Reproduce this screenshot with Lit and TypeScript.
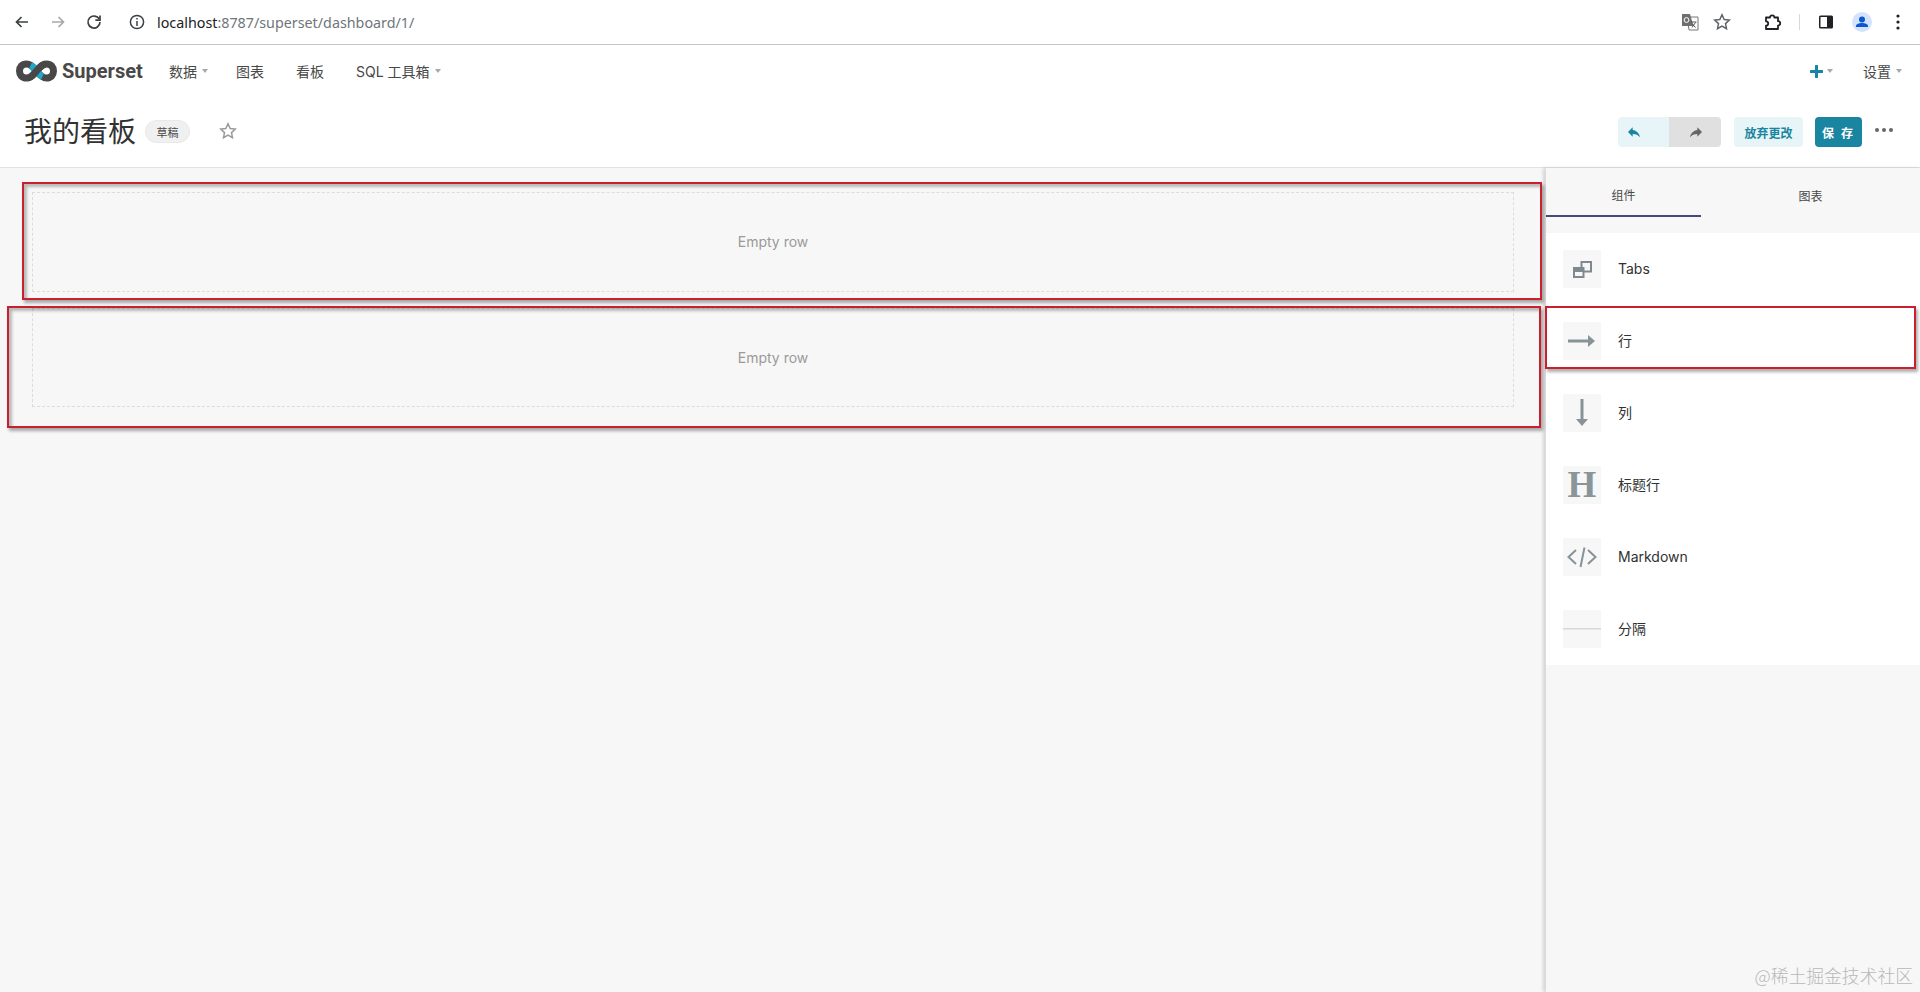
import { LitElement, html, css } from "lit";
import { customElement } from "lit/decorators.js";

@customElement("app-root")
export class AppRoot extends LitElement {
  static styles = css`
    :host { display: block; width: 1920px; height: 992px; position: relative; overflow: hidden; background: #f7f7f7; font-family: "Inter", "Noto Sans CJK SC", sans-serif; color: #323232; }
    * { box-sizing: border-box; }
    svg { display: block; }

    .chrome { height: 45px; background: #fff; border-bottom: 1px solid #c4c4c4; display: flex; align-items: center; padding-left: 12px; }
    .cb { width: 20px; height: 20px; margin-right: 16px; }
    .info { margin-left: 7px; margin-right: 10px; width: 20px; height: 20px; }
    .url { font-family: "Noto Sans", sans-serif; font-size: 14.3px; color: #70757a; white-space: nowrap; }
    .url b { font-weight: 400; color: #202124; }
    .chrome-right { margin-left: auto; display: flex; align-items: center; height: 100%; }
    .tr { width: 18px; height: 18px; margin-right: 14px; }
    .st { width: 18px; height: 18px; margin-right: 33px; }
    .pz { width: 18px; height: 18px; margin-right: 17px; }
    .sep { width: 1px; height: 16px; background: #d8d8d8; margin-right: 18px; }
    .sp { width: 16px; height: 16px; margin-right: 18px; }
    .av { width: 20px; height: 20px; margin-right: 24px; }
    .dots { width: 4px; height: 16px; margin-right: 20px; }

    .nav { height: 55px; background: #fff; display: flex; align-items: center; padding: 0 0 3px 16px; font-size: 14px; color: #484848; }
    .logo { width: 41px; height: 22px; margin-right: 5px; }
    .brand { font-family: "Roboto", sans-serif; font-weight: 700; font-size: 20px; color: #484848; margin-right: 26px; width: 81px; white-space: nowrap; }
    .menu { display: flex; gap: 32px; align-items: center; }
    .mi { display: flex; align-items: center; white-space: nowrap; }
    .mi.tight { margin-right: -4px; }
    .caret { width: 0; height: 0; border-left: 3.5px solid transparent; border-right: 3.5px solid transparent; border-top: 4px solid #a8a8a8; margin-left: 5px; }
    .nav-right { margin-left: auto; display: flex; align-items: center; padding-right: 18px; }
    .plus { width: 13px; height: 13px; }
    .plus-group { display: flex; align-items: center; margin-right: 30px; }
    .plus-group .caret { margin-left: 4px; }

    .header { height: 68px; background: #fff; border-bottom: 1px solid #e2e2e2; display: flex; align-items: center; padding: 0 27px 3px 24px; }
    .title { font-size: 28px; line-height: 40px; color: #323232; white-space: nowrap; }
    .tag { width: 45px; height: 23px; margin-left: 9px; margin-top: -1px; border-radius: 12px; background: #f0f0f0; border: 1px solid #e8e8e8; font-size: 11px; display: flex; align-items: center; justify-content: center; color: #484848; }
    .star { width: 18px; height: 18px; margin-left: 29px; margin-top: -2px; }
    .actions { margin-left: auto; display: flex; align-items: center; }
    .undo { width: 51px; height: 30px; background: #e8f5f8; border-radius: 4px 0 0 4px; display: flex; align-items: center; padding-left: 8px; }
    .redo { width: 52px; height: 30px; background: #e0e0e0; border-radius: 0 4px 4px 0; display: flex; align-items: center; padding-left: 19px; }
    .undo svg, .redo svg { width: 16px; height: 16px; }
    .discard { width: 69px; height: 30px; margin-left: 13px; background: #e8f5f8; color: #1a85a0; border-radius: 4px; font-size: 12px; font-weight: 700; display: flex; align-items: center; justify-content: center; }
    .save { width: 47px; height: 30px; margin-left: 12px; background: #1a85a0; color: #fff; border-radius: 4px; font-size: 12px; font-weight: 700; display: flex; align-items: center; justify-content: center; letter-spacing: 2px; }
    .more { display: flex; gap: 3px; margin-left: 13px; margin-bottom: 4px; }
    .more i { width: 4px; height: 4px; border-radius: 50%; background: #666; display: block; }

    .main { display: flex; height: 824px; }
    .canvas { flex: 1; padding: 24px 31px 0 32px; display: flex; flex-direction: column; gap: 16px; }
    .row { height: 100px; padding-bottom: 2px; border: 1px dashed #dcdcdc; display: flex; align-items: center; justify-content: center; font-size: 14px; color: #9a9a9a; }
    .row + .row { height: 99px; padding-bottom: 0; }

    .side { width: 375px; border-left: 1px solid #dcdcdc; box-shadow: -2px 0 3px rgba(0,0,0,.14); background: #f7f7f7; }
    .tabs { height: 65px; display: flex; font-size: 12px; color: #484848; }
    .tab { height: 49px; display: flex; align-items: center; justify-content: center; padding-top: 6px; }
    .tab.on { width: 155px; border-bottom: 2px solid #484a7e; }
    .tab.off { width: 219px; }
    .list { background: #fff; }
    .item { height: 72px; display: flex; align-items: center; padding-left: 17px; font-size: 14px; color: #323232; }
    .item span.lb { margin-top: -2px; }
    .box { width: 38px; height: 38px; background: #f7f7f7; display: flex; align-items: center; justify-content: center; margin-right: 17px; }
    .box svg { width: 38px; height: 38px; }
    .h { font-family: "Liberation Serif", serif; font-weight: 700; font-size: 37px; line-height: 38px; color: #8a959a; }

    .mark { position: absolute; border: 2px solid #c8202f; box-shadow: 2px 3px 3px rgba(0,0,0,.32), inset 3px 3px 3px rgba(0,0,0,.25); pointer-events: none; }
    .m1 { left: 22px; top: 182px; width: 1520px; height: 118px; }
    .m2 { left: 7px; top: 306px; width: 1534px; height: 122px; }
    .m3 { left: 1545px; top: 306px; width: 371px; height: 63px; box-shadow: 2px 3px 3px rgba(0,0,0,.32); }
    .wm { position: absolute; right: 7px; bottom: 5px; font-size: 17.8px; line-height: 24px; color: #b8b8b8; white-space: nowrap; font-family: "Noto Sans CJK SC", sans-serif; font-weight: 300; }
  `;

  render() {
    return html`
      <div class="chrome">
        <svg class="cb" viewBox="0 0 20 20" fill="none" stroke="#3c4043" stroke-width="1.7"><path d="M16 10H4.500M9.500 5l-5 5 5 5"/></svg>
        <svg class="cb" viewBox="0 0 20 20" fill="none" stroke="#a6a8ab" stroke-width="1.7"><path d="M4 10h11.500M10.500 5l5 5-5 5"/></svg>
        <svg class="cb" viewBox="0 0 20 20" fill="none" stroke="#3c4043" stroke-width="1.7"><path d="M15.300 7.200A6 6 0 1 0 16 10"/><path d="M16 3.500v4.600h-4.600"/></svg>
        <svg class="info" viewBox="0 0 20 20" fill="none" stroke="#3c4043" stroke-width="1.500"><circle cx="10" cy="10" r="6.600"/><path d="M10 9v5M10 6v1.500"/></svg>
        <div class="url"><b>localhost</b>:8787/superset/dashboard/1/</div>
        <div class="chrome-right">
          <svg class="tr" viewBox="0 0 18 18"><path d="M6 4h11v13H8z" fill="#fff" stroke="#777" stroke-width="1"/><path d="M1 1h8l3.500 12H1z" fill="#6f6f6f"/><circle cx="5.500" cy="7" r="2.400" fill="none" stroke="#fff" stroke-width="1"/><path d="M10 9h5.500M14.500 9.500l-3.500 5M11 10.500l3.500 4" fill="none" stroke="#555" stroke-width="1"/></svg>
          <svg class="st" viewBox="0 0 18 18" fill="none" stroke="#5f6368" stroke-width="1.500"><path d="M9 1.800l2.200 4.700 5.100.6-3.800 3.500 1 5.100L9 13.200l-4.500 2.500 1-5.100-3.800-3.500 5.100-.6z"/></svg>
          <svg class="pz" viewBox="0 0 18 18" fill="none" stroke="#202124" stroke-width="1.800" stroke-linejoin="round"><path d="M2 4.500h4a2.200 2.200 0 0 1 4.400 0H14v3.700a2.200 2.200 0 0 1 0 4.400V16H2v-3.300a2.200 2.200 0 0 0 0-4.400z"/></svg>
          <div class="sep"></div>
          <svg class="sp" viewBox="0 0 16 16"><rect x="1" y="1.500" width="14" height="13" rx="1.500" fill="#202124"/><rect x="2.500" y="3" width="6.500" height="10" fill="#fff"/></svg>
          <svg class="av" viewBox="0 0 20 20"><circle cx="10" cy="10" r="10" fill="#d3e3fd"/><circle cx="10" cy="7.500" r="3" fill="#0b57d0"/><path d="M4 15v-1c0-2 3-3 6-3s6 1 6 3v1z" fill="#0b57d0"/></svg>
          <svg class="dots" viewBox="0 0 4 16" fill="#202124"><circle cx="2" cy="2" r="1.600"/><circle cx="2" cy="8" r="1.600"/><circle cx="2" cy="14" r="1.600"/></svg>
        </div>
      </div>

      <div class="nav">
        <svg class="logo" viewBox="-0.500 -1 41 22" fill="none" stroke-width="7">
          <path d="M10 3C5.500 3 3 6 3 10s2.500 7 7 7c4 0 7-3 10-7s6-7 10-7c4.500 0 7 3 7 7s-2.500 7-7 7c-4 0-7-3-10-7S14 3 10 3z" stroke="#484848"/>
          <path d="M14 4.500c2 1 4 3 6 5.500s4 4.500 6 5.500" stroke="#20a7c9"/>
          <path d="M11 17c4 0 6-3.500 9-7s5-6 9-7" stroke="#484848"/>
        </svg>
        <div class="brand">Superset</div>
        <div class="menu">
          <div class="mi tight">数据<span class="caret"></span></div>
          <div class="mi">图表</div>
          <div class="mi">看板</div>
          <div class="mi">SQL 工具箱<span class="caret"></span></div>
        </div>
        <div class="nav-right">
          <div class="plus-group">
            <svg class="plus" viewBox="0 0 13 13" fill="#1a85a0"><path d="M5 1a1.500 1.500 0 0 1 3 0v4h4a1.500 1.500 0 0 1 0 3H8v4a1.500 1.500 0 0 1-3 0V8H1a1.500 1.500 0 0 1 0-3h4z"/></svg>
            <span class="caret"></span>
          </div>
          <div class="mi">设置<span class="caret"></span></div>
        </div>
      </div>

      <div class="header">
        <div class="title">我的看板</div>
        <div class="tag">草稿</div>
        <svg class="star" viewBox="0 0 18 18" fill="none" stroke="#9a9a9a" stroke-width="1.500"><path d="M9 1.800l2.200 4.700 5.100.6-3.800 3.500 1 5.100L9 13.200l-4.500 2.500 1-5.100-3.800-3.500 5.100-.6z"/></svg>
        <div class="actions">
          <div class="undo"><svg viewBox="0 0 24 24" fill="#1a85a0"><path d="M10 9V5l-7 7 7 7v-4.100c5 0 8.500 1.600 11 5.100-1-5-4-10-11-11z"/></svg></div>
          <div class="redo"><svg viewBox="0 0 24 24" fill="#666"><path d="M14 9V5l7 7-7 7v-4.100c-5 0-8.500 1.600-11 5.100 1-5 4-10 11-11z"/></svg></div>
          <div class="discard">放弃更改</div>
          <div class="save">保 存</div>
          <div class="more"><i></i><i></i><i></i></div>
        </div>
      </div>

      <div class="main">
        <div class="canvas">
          <div class="row">Empty row</div>
          <div class="row">Empty row</div>
        </div>
        <div class="side">
          <div class="tabs">
            <div class="tab on">组件</div>
            <div class="tab off">图表</div>
          </div>
          <div class="list">
            <div class="item"><div class="box"><svg viewBox="0 0 38 38" fill="none" stroke="#7f8a8f" stroke-width="2"><rect x="18.500" y="12" width="9.500" height="9.500"/><rect x="11" y="18" width="9.500" height="9" fill="#f7f7f7"/><path d="M11 20.500h9.500" stroke-width="3"/></svg></div><span class="lb">Tabs</span></div>
            <div class="item"><div class="box"><svg viewBox="0 0 38 38" fill="#879399"><rect x="5" y="17.500" width="21" height="3"/><path d="M25 13l7 6-7 6z"/></svg></div><span class="lb">行</span></div>
            <div class="item"><div class="box"><svg viewBox="0 0 38 38" fill="#879399"><rect x="17.500" y="5" width="3" height="21"/><path d="M13 25l6 7 6-7z"/></svg></div><span class="lb">列</span></div>
            <div class="item"><div class="box"><span class="h">H</span></div><span class="lb">标题行</span></div>
            <div class="item"><div class="box"><svg viewBox="0 0 38 38" fill="none" stroke="#879399" stroke-width="2"><path d="M13 12l-7.500 7 7.500 7M25 12l7.500 7-7.500 7M21.500 9.500l-4 19.500"/></svg></div><span class="lb">Markdown</span></div>
            <div class="item"><div class="box"><svg viewBox="0 0 38 38"><rect x="0" y="18" width="38" height="1.500" fill="#d8d8d8"/></svg></div><span class="lb">分隔</span></div>
          </div>
        </div>
      </div>

      <div class="mark m1"></div>
      <div class="mark m2"></div>
      <div class="mark m3"></div>
      <div class="wm">@稀土掘金技术社区</div>
    `;
  }
}
